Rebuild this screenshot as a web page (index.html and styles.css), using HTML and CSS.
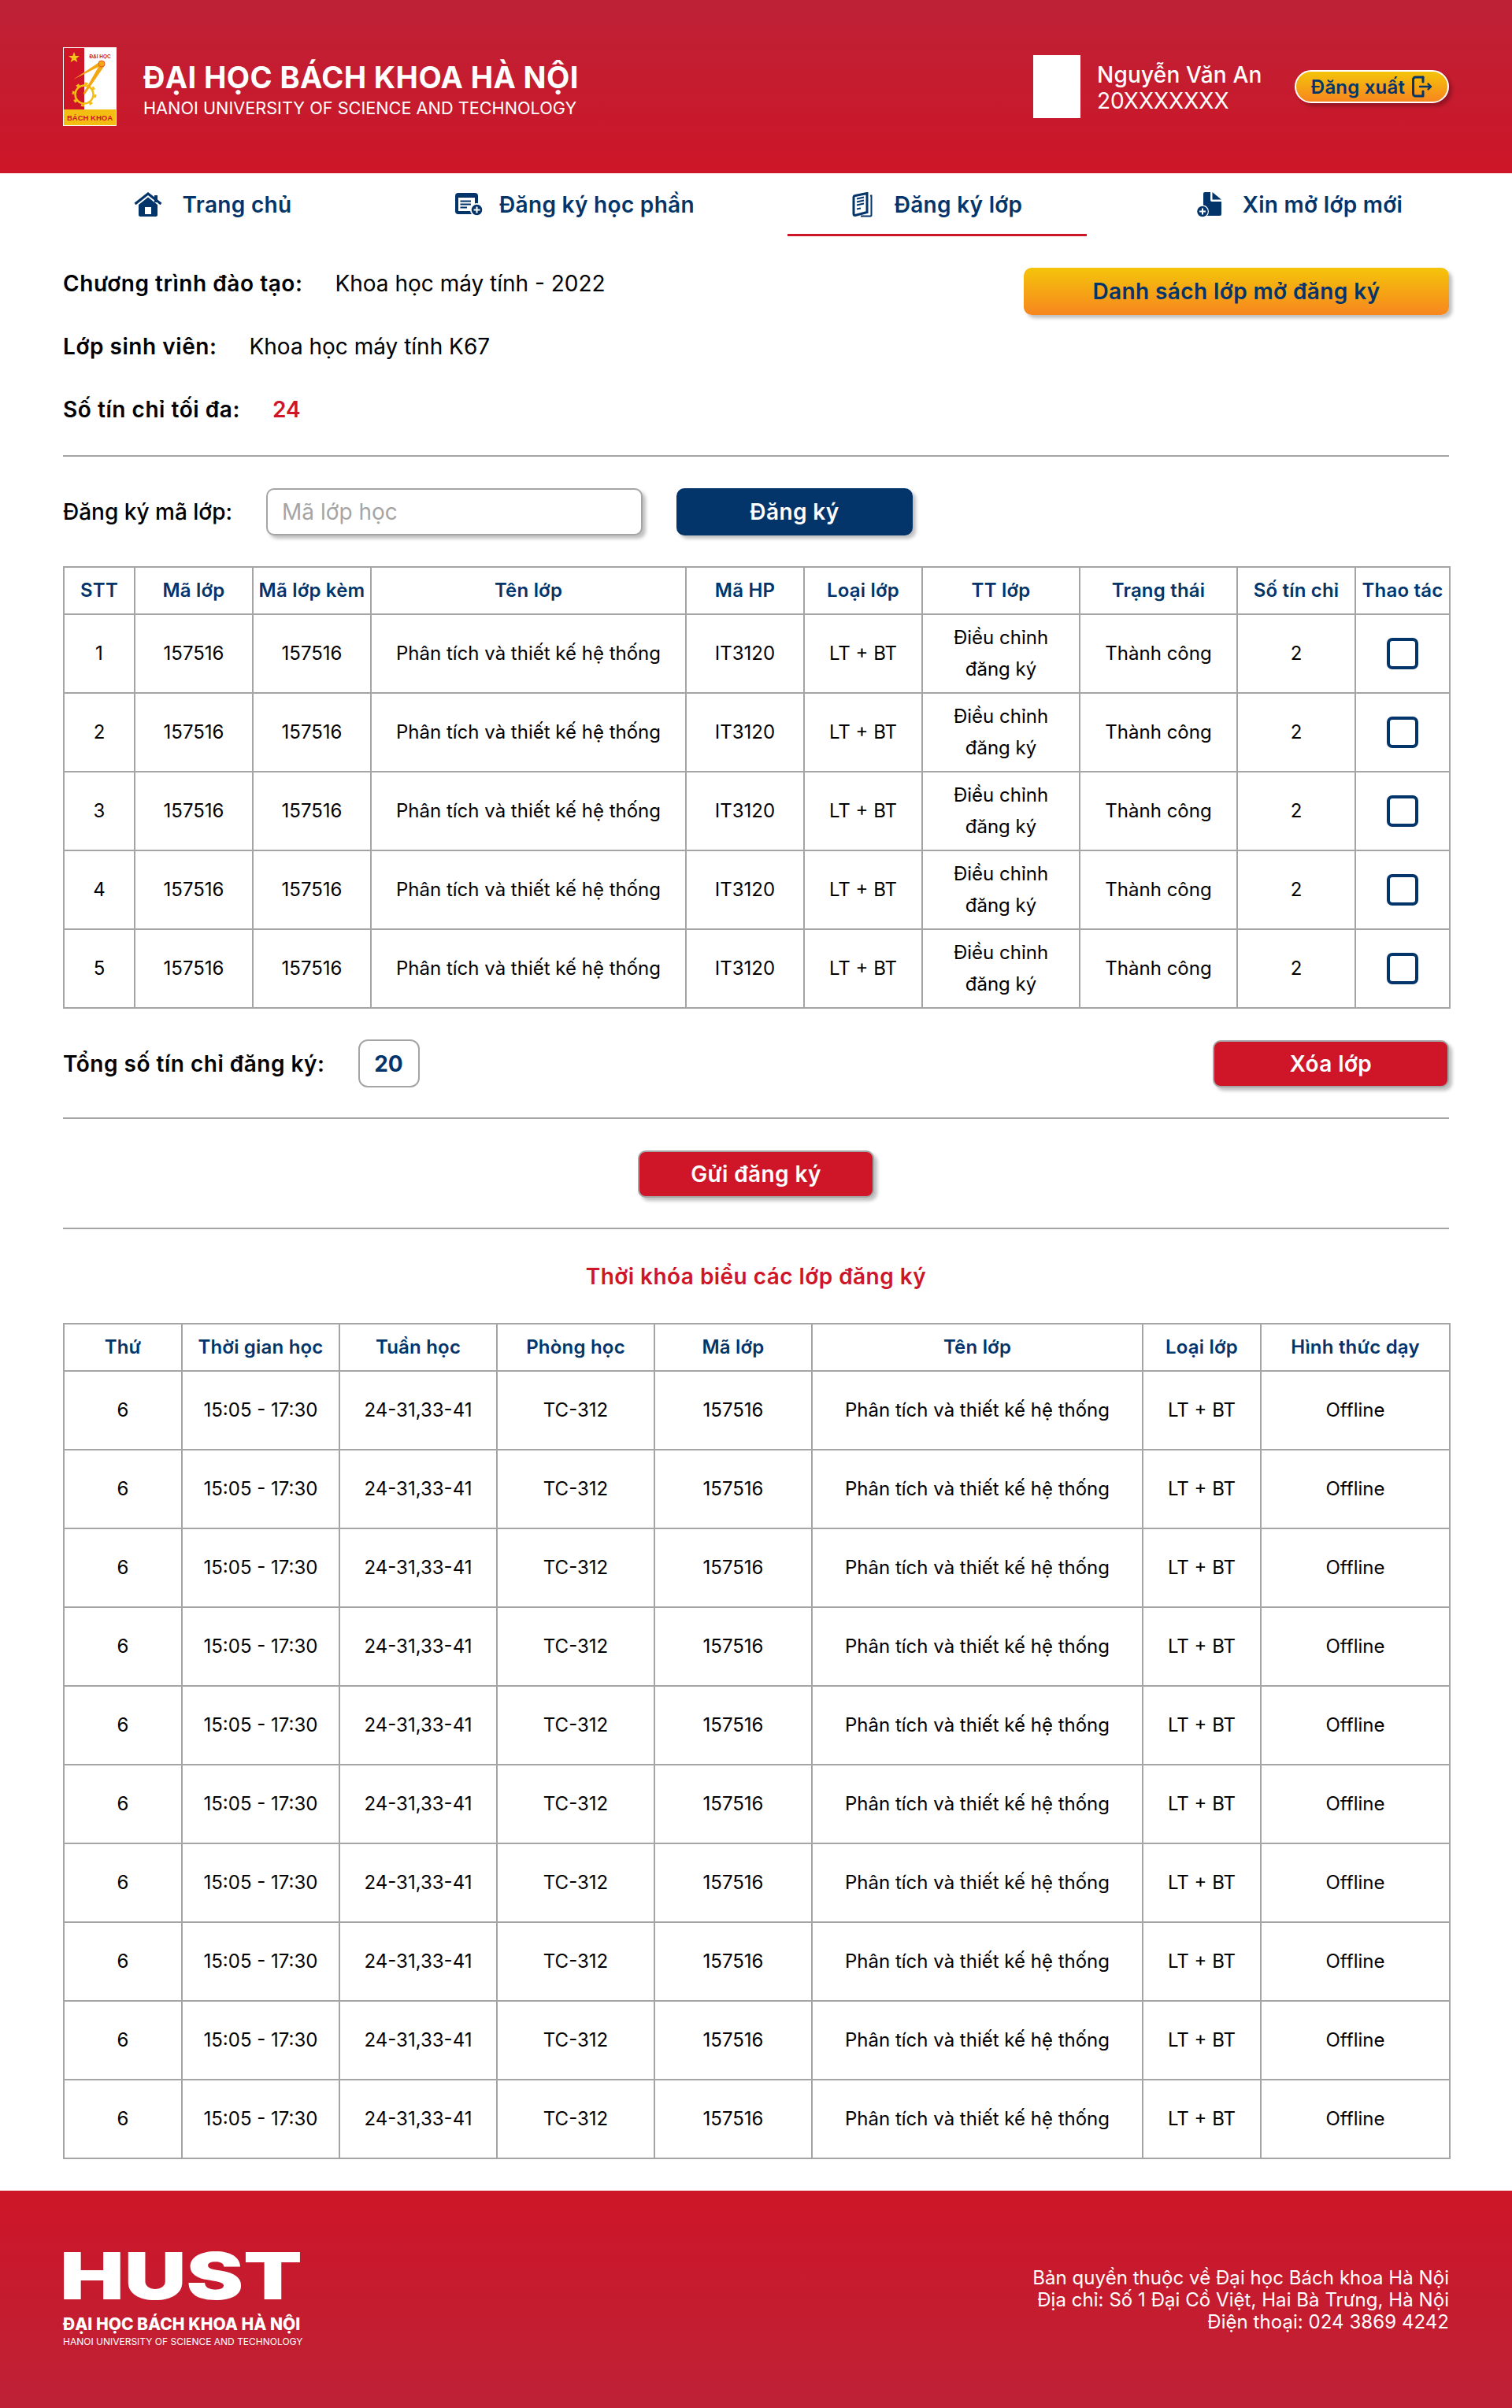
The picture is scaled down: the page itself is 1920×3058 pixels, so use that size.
FILE: index.html
```html
<!DOCTYPE html>
<html lang="vi">
<head>
    <meta charset="UTF-8">
    <title>Đăng ký lớp</title>
    <link rel="stylesheet" href="styles.css">
</head>
<body>
    <header class="top-bar">
        <div class="brand">
            <svg class="brand-logo" viewBox="0 0 68 100" width="68" height="100">
                <rect width="68" height="100" fill="#fff"/>
                <rect x="1" y="1" width="26" height="78" fill="#ce1628"/>
                <rect x="1" y="79" width="66" height="20" fill="#f3bd12"/>
                <polygon points="14,6 15.8,11 21,11 16.8,14.2 18.4,19 14,16.2 9.6,19 11.2,14.2 7,11 12.2,11" fill="#f5c518"/>
                <text class="logo-small" x="47" y="14" text-anchor="middle" textLength="27" lengthAdjust="spacingAndGlyphs">ĐẠI HỌC</text>
                <circle cx="27" cy="60" r="11.5" fill="none" stroke="#f3bd12" stroke-width="2.4"/>
                <circle cx="27" cy="60" r="14" fill="none" stroke="#f3bd12" stroke-width="3" stroke-dasharray="4 7"/>
                <polygon points="49,17 53,23 27,61 26,58 45,25 13,41" fill="#f3a712"/>
                <circle cx="49" cy="21" r="4" fill="#f3a712" stroke="#e8552a"/>
                <text class="logo-big" x="34" y="93" text-anchor="middle">BÁCH KHOA</text>
            </svg>
            <div class="brand-text">
                <div class="brand-name">ĐẠI HỌC BÁCH KHOA HÀ NỘI</div>
                <div class="brand-sub">HANOI UNIVERSITY OF SCIENCE AND TECHNOLOGY</div>
            </div>
        </div>
        <div class="user-box">
            <div class="avatar"></div>
            <div class="user-info">
                <div class="user-name">Nguyễn Văn An</div>
                <div class="user-id">20XXXXXXX</div>
            </div>
            <button type="button" class="btn-logout">Đăng xuất
                <svg viewBox="0 0 26 28" width="26" height="28" fill="none" stroke="#03346a" stroke-width="3" stroke-linecap="round" stroke-linejoin="round">
                    <path d="M14 2H4.500A3 3 0 0 0 1.500 5V23A3 3 0 0 0 4.500 26H14V20"/>
                    <path d="M14 2V8"/>
                    <path d="M10 14H24M20.500 10.500L24 14L20.500 17.500" stroke-width="2.400"/>
                </svg>
            </button>
        </div>
    </header>

    <nav class="tabs">
        <a class="tab tab-wide">
            <svg viewBox="0 0 36 32" width="36" height="32">
                <rect x="26" y="4" width="4" height="9" fill="#03346a"/>
                <path d="M1.500 15L18 2L34.500 15" fill="none" stroke="#03346a" stroke-width="3.200"/>
                <path d="M6 16L18 6.500L30 16V29A2 2 0 0 1 28 31H8A2 2 0 0 1 6 29Z" fill="#03346a"/>
                <rect x="14" y="19" width="8" height="9" fill="#fff"/>
            </svg>
            Trang chủ
        </a>
        <a class="tab">
            <svg viewBox="0 0 36 30" width="36" height="30">
                <rect width="29" height="27" rx="4" fill="#03346a"/>
                <rect x="4" y="6" width="21" height="17" fill="#fff"/>
                <path d="M6.500 10.500H20M6.500 14.500H20M6.500 18.500H15" stroke="#03346a" stroke-width="2"/>
                <circle cx="27.500" cy="21.500" r="8.500" fill="#fff"/>
                <circle cx="27.500" cy="21.500" r="6.800" fill="#03346a"/>
                <path d="M23.500 21.500H31.500M27.500 17.500V25.500" stroke="#fff" stroke-width="2"/>
            </svg>
            Đăng ký học phần
        </a>
        <a class="tab tab-wide active">
            <svg viewBox="0 0 28 32" width="28" height="32" fill="none" stroke="#03346a">
                <path d="M4 4.500L19 1.500V25.500L4 29.500A2 2 0 0 1 2 27.500V6.500A2 2 0 0 1 4 4.500Z" stroke-width="3"/>
                <path d="M6 8.500L15 6.500M6 12.500L15 10.500M6 16.500L15 14.500M6 21.500L11 20.500" stroke-width="1.800"/>
                <path d="M23 4.500H24.500V29A1.500 1.500 0 0 1 23 30.500H11" stroke-width="2"/>
            </svg>
            Đăng ký lớp
        </a>
        <a class="tab tab-wide">
            <svg viewBox="0 0 33 32" width="33" height="32">
                <path d="M9 2A2 2 0 0 1 11 0H18V10A2 2 0 0 0 20 12H32V28A2 2 0 0 1 30 30H9Z" fill="#03346a"/>
                <path d="M20.500 0L32 9.500H20.500Z" fill="#03346a"/>
                <circle cx="8" cy="24.500" r="8" fill="#fff"/>
                <circle cx="8" cy="24.500" r="6.800" fill="#03346a"/>
                <path d="M4 24.500H12M8 20.500V28.500" stroke="#fff" stroke-width="2"/>
            </svg>
            Xin mở lớp mới
        </a>
    </nav>

    <main class="content">
        <section class="program">
            <div class="program-info">
                <div class="info-row"><span class="info-label">Chương trình đào tạo:</span><span>Khoa học máy tính - 2022</span></div>
                <div class="info-row"><span class="info-label">Lớp sinh viên:</span><span>Khoa học máy tính K67</span></div>
                <div class="info-row"><span class="info-label">Số tín chỉ tối đa:</span><span class="info-max">24</span></div>
            </div>
            <button type="button" class="btn btn-yellow">Danh sách lớp mở đăng ký</button>
        </section>

        <hr class="divider">

        <form class="register-form">
            <label for="maLop">Đăng ký mã lớp:</label>
            <input type="text" id="maLop" placeholder="Mã lớp học">
            <button type="button" class="btn btn-navy">Đăng ký</button>
        </form>

        <table class="grid">
            <colgroup>
                <col class="w90"><col class="w150"><col class="w150"><col class="w400"><col class="w150">
                <col class="w150"><col class="w200"><col class="w200"><col class="w150"><col class="w120">
            </colgroup>
            <thead>
                <tr><th>STT</th><th>Mã lớp</th><th>Mã lớp kèm</th><th>Tên lớp</th><th>Mã HP</th><th>Loại lớp</th><th>TT lớp</th><th>Trạng thái</th><th>Số tín chỉ</th><th>Thao tác</th></tr>
            </thead>
            <tbody>
                <tr><td>1</td><td>157516</td><td>157516</td><td>Phân tích và thiết kế hệ thống</td><td>IT3120</td><td>LT + BT</td><td>Điều chỉnh<br>đăng ký</td><td>Thành công</td><td>2</td><td><input type="checkbox" class="check"></td></tr>
                <tr><td>2</td><td>157516</td><td>157516</td><td>Phân tích và thiết kế hệ thống</td><td>IT3120</td><td>LT + BT</td><td>Điều chỉnh<br>đăng ký</td><td>Thành công</td><td>2</td><td><input type="checkbox" class="check"></td></tr>
                <tr><td>3</td><td>157516</td><td>157516</td><td>Phân tích và thiết kế hệ thống</td><td>IT3120</td><td>LT + BT</td><td>Điều chỉnh<br>đăng ký</td><td>Thành công</td><td>2</td><td><input type="checkbox" class="check"></td></tr>
                <tr><td>4</td><td>157516</td><td>157516</td><td>Phân tích và thiết kế hệ thống</td><td>IT3120</td><td>LT + BT</td><td>Điều chỉnh<br>đăng ký</td><td>Thành công</td><td>2</td><td><input type="checkbox" class="check"></td></tr>
                <tr><td>5</td><td>157516</td><td>157516</td><td>Phân tích và thiết kế hệ thống</td><td>IT3120</td><td>LT + BT</td><td>Điều chỉnh<br>đăng ký</td><td>Thành công</td><td>2</td><td><input type="checkbox" class="check"></td></tr>
            </tbody>
        </table>

        <div class="total-row">
            <div class="total-left">
                <span class="total-label">Tổng số tín chỉ đăng ký:</span>
                <span class="total-box">20</span>
            </div>
            <button type="button" class="btn btn-red btn-delete">Xóa lớp</button>
        </div>

        <hr class="divider">

        <div class="send-row">
            <button type="button" class="btn btn-red btn-send">Gửi đăng ký</button>
        </div>

        <hr class="divider">

        <h2 class="section-title">Thời khóa biểu các lớp đăng ký</h2>

        <table class="grid">
            <colgroup>
                <col class="w150"><col class="w200"><col class="w200"><col class="w200">
                <col class="w200"><col class="w420"><col class="w150"><col class="w240">
            </colgroup>
            <thead>
                <tr><th>Thứ</th><th>Thời gian học</th><th>Tuần học</th><th>Phòng học</th><th>Mã lớp</th><th>Tên lớp</th><th>Loại lớp</th><th>Hình thức dạy</th></tr>
            </thead>
            <tbody>
                <tr><td>6</td><td>15:05 - 17:30</td><td>24-31,33-41</td><td>TC-312</td><td>157516</td><td>Phân tích và thiết kế hệ thống</td><td>LT + BT</td><td>Offline</td></tr>
                <tr><td>6</td><td>15:05 - 17:30</td><td>24-31,33-41</td><td>TC-312</td><td>157516</td><td>Phân tích và thiết kế hệ thống</td><td>LT + BT</td><td>Offline</td></tr>
                <tr><td>6</td><td>15:05 - 17:30</td><td>24-31,33-41</td><td>TC-312</td><td>157516</td><td>Phân tích và thiết kế hệ thống</td><td>LT + BT</td><td>Offline</td></tr>
                <tr><td>6</td><td>15:05 - 17:30</td><td>24-31,33-41</td><td>TC-312</td><td>157516</td><td>Phân tích và thiết kế hệ thống</td><td>LT + BT</td><td>Offline</td></tr>
                <tr><td>6</td><td>15:05 - 17:30</td><td>24-31,33-41</td><td>TC-312</td><td>157516</td><td>Phân tích và thiết kế hệ thống</td><td>LT + BT</td><td>Offline</td></tr>
                <tr><td>6</td><td>15:05 - 17:30</td><td>24-31,33-41</td><td>TC-312</td><td>157516</td><td>Phân tích và thiết kế hệ thống</td><td>LT + BT</td><td>Offline</td></tr>
                <tr><td>6</td><td>15:05 - 17:30</td><td>24-31,33-41</td><td>TC-312</td><td>157516</td><td>Phân tích và thiết kế hệ thống</td><td>LT + BT</td><td>Offline</td></tr>
                <tr><td>6</td><td>15:05 - 17:30</td><td>24-31,33-41</td><td>TC-312</td><td>157516</td><td>Phân tích và thiết kế hệ thống</td><td>LT + BT</td><td>Offline</td></tr>
                <tr><td>6</td><td>15:05 - 17:30</td><td>24-31,33-41</td><td>TC-312</td><td>157516</td><td>Phân tích và thiết kế hệ thống</td><td>LT + BT</td><td>Offline</td></tr>
                <tr><td>6</td><td>15:05 - 17:30</td><td>24-31,33-41</td><td>TC-312</td><td>157516</td><td>Phân tích và thiết kế hệ thống</td><td>LT + BT</td><td>Offline</td></tr>
            </tbody>
        </table>
    </main>

    <footer class="bottom-bar">
        <div class="footer-logo">
            <svg viewBox="0 0 300 100" width="300" height="100">
                <text class="hust" x="-4" y="80" textLength="308" lengthAdjust="spacingAndGlyphs">HUST</text>
            </svg>
            <div class="footer-name">ĐẠI HỌC BÁCH KHOA HÀ NỘI</div>
            <div class="footer-sub">HANOI UNIVERSITY OF SCIENCE AND TECHNOLOGY</div>
        </div>
        <div class="footer-contact">
            Bản quyền thuộc về Đại học Bách khoa Hà Nội<br>
            Địa chỉ: Số 1 Đại Cồ Việt, Hai Bà Trưng, Hà Nội<br>
            Điện thoại: 024 3869 4242
        </div>
    </footer>
</body>
</html>
```

FILE: styles.css
```css
* {
    box-sizing: border-box;
}
body {
    margin: 0;
    font-family: Inter, "Noto Sans", sans-serif;
    font-size: 28px;
    color: #000;
    background-color: #fff;
}

/* header */
.top-bar {
    height: 220px;
    padding: 0 80px;
    display: flex;
    align-items: center;
    justify-content: space-between;
    background: linear-gradient(#be2136, #cd1628);
    color: #fff;
}
.brand {
    display: flex;
    align-items: center;
    gap: 34px;
}
.brand-logo {
    display: block;
}
.logo-small {
    font-family: "Liberation Sans", sans-serif;
    font-size: 8px;
    font-weight: 700;
    fill: #ce1628;
}
.logo-big {
    font-family: "Liberation Sans", sans-serif;
    font-size: 9.500px;
    font-weight: 700;
    fill: #ce1628;
}
.brand-text {
    padding-top: 8px;
}
.brand-name {
    font-size: 38px;
    font-weight: 700;
    line-height: 46px;
    letter-spacing: 0.4px;
    white-space: nowrap;
}
.brand-sub {
    font-size: 21.700px;
    font-weight: 400;
    line-height: 32px;
    white-space: nowrap;
}
.user-box {
    display: flex;
    align-items: center;
}
.avatar {
    width: 60px;
    height: 80px;
    background-color: #fff;
}
.user-info {
    margin-left: 21px;
    width: 251px;
    padding-top: 2px;
}
.user-name {
    font-weight: 500;
    line-height: 34px;
    letter-spacing: 0.2px;
}
.user-id {
    font-weight: 400;
    line-height: 32px;
}
.btn-logout {
    width: 196px;
    height: 42px;
    padding: 0;
    display: flex;
    align-items: center;
    justify-content: center;
    gap: 9px;
    border: 2px solid #fff;
    border-radius: 21px;
    background: linear-gradient(#f4c40a, #f7861f);
    box-shadow: 4px 4px 4px rgba(0, 0, 0, 0.25);
    color: #03346a;
    font-family: inherit;
    font-size: 24px;
    font-weight: 600;
    letter-spacing: 0.2px;
}

/* tabs */
.tabs {
    height: 80px;
    padding: 0 80px;
    display: flex;
    gap: 80px;
}
.tab {
    width: 380px;
    display: flex;
    align-items: center;
    justify-content: center;
    gap: 20px;
    color: #03346a;
    font-weight: 600;
    letter-spacing: 0.3px;
}
.tab-wide {
    gap: 26px;
}
.tab.active {
    border-bottom: 3px solid #ce1628;
    padding-top: 3px;
}

/* content */
.content {
    padding: 0 80px 40px;
}
.program {
    padding-top: 40px;
    display: flex;
    justify-content: space-between;
    align-items: flex-start;
}
.info-row {
    height: 40px;
    margin-bottom: 40px;
    display: flex;
    align-items: center;
    gap: 41px;
}
.info-row:last-child {
    margin-bottom: 0;
}
.info-label {
    font-weight: 600;
    letter-spacing: 0.55px;
}
.info-max {
    color: #ce1628;
    font-weight: 600;
}
.divider {
    height: 2px;
    margin: 38px 0 40px;
    border: none;
    background-color: #a5a5a5;
}
.btn {
    height: 60px;
    padding: 0;
    border: none;
    border-radius: 10px;
    box-shadow: 4px 4px 4px rgba(0, 0, 0, 0.25);
    font-family: inherit;
    font-size: 28px;
    font-weight: 600;
    letter-spacing: 0.4px;
}
.btn-yellow {
    width: 540px;
    background: linear-gradient(#f4c40a, #f7861f);
    color: #03346a;
}
.btn-navy {
    width: 300px;
    background-color: #03346a;
    color: #fff;
}
.btn-red {
    width: 300px;
    border: 2px solid #a5a5a5;
    background-color: #ce1628;
    color: #fff;
}
.register-form {
    display: flex;
    align-items: center;
}
.register-form label {
    width: 258px;
    font-weight: 500;
}
.register-form input {
    width: 478px;
    height: 60px;
    margin-right: 43px;
    padding: 0 18px;
    border: 2px solid #a5a5a5;
    border-radius: 10px;
    box-shadow: 4px 4px 4px rgba(0, 0, 0, 0.25);
    font-family: inherit;
    font-size: 28px;
}
.register-form input::placeholder {
    color: #a5a5a5;
}

/* tables */
.grid {
    width: 1760px;
    margin-top: 39px;
    border-collapse: collapse;
    table-layout: fixed;
    text-align: center;
    font-size: 24px;
    line-height: 40px;
}
.grid th {
    height: 60px;
    padding: 0;
    border: 2px solid #a5a5a5;
    color: #03346a;
    font-weight: 600;
    letter-spacing: 0.2px;
    white-space: nowrap;
}
.grid td {
    height: 100px;
    padding: 0;
    border: 2px solid #a5a5a5;
}
.w90 { width: 90px; }
.w120 { width: 120px; }
.w150 { width: 150px; }
.w200 { width: 200px; }
.w240 { width: 240px; }
.w400 { width: 400px; }
.w420 { width: 420px; }
.check {
    appearance: none;
    display: block;
    width: 40px;
    height: 40px;
    margin: 0 auto;
    border: 4px solid #03346a;
    border-radius: 7px;
    background-color: #fff;
}
.total-row {
    margin-top: 39px;
    display: flex;
    align-items: center;
    justify-content: space-between;
}
.total-left {
    display: flex;
    align-items: center;
    gap: 42px;
}
.total-label {
    font-weight: 600;
    letter-spacing: 0.5px;
}
.total-box {
    width: 78px;
    height: 61px;
    display: flex;
    align-items: center;
    justify-content: center;
    border: 2px solid #a5a5a5;
    border-radius: 12px;
    color: #03346a;
    font-size: 28px;
    font-weight: 700;
}
.send-row {
    display: flex;
    justify-content: center;
}
.section-title {
    margin: 0;
    text-align: center;
    color: #ce1628;
    font-size: 28px;
    line-height: 40px;
    font-weight: 600;
    letter-spacing: 0.45px;
}

/* footer */
.bottom-bar {
    height: 278px;
    padding: 0 80px;
    display: flex;
    align-items: center;
    justify-content: space-between;
    background: linear-gradient(#cd1628, #be2136);
    color: #fff;
}
.footer-logo {
    width: 300px;
}
.footer-logo svg {
    display: block;
    margin: -20px 0;
    overflow: visible;
}
.hust {
    font-family: Inter, sans-serif;
    font-size: 82px;
    font-weight: 900;
    fill: #fff;
}
.footer-name,
.footer-sub {
    text-align: center;
    white-space: nowrap;
}
.footer-name {
    margin-top: 18px;
    font-size: 21px;
    font-weight: 800;
    line-height: 28px;
}
.footer-sub {
    font-size: 12px;
    line-height: 16px;
}
.footer-contact {
    text-align: right;
    font-size: 24px;
    line-height: 28px;
    font-weight: 400;
    letter-spacing: 0.05px;
}
```
